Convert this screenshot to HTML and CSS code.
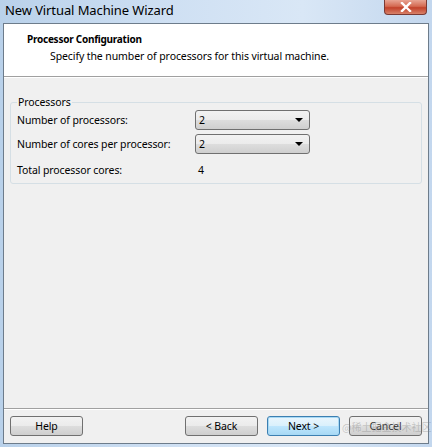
FILE: index.html
```html
<!DOCTYPE html>
<html>
<head>
<meta charset="utf-8">
<link rel="stylesheet" href="styles.css">
</head>
<body>
<div class="window">
  <div class="titlebar">
    <span class="title">New Virtual Machine Wizard</span>
    <div class="close">
      <svg width="14" height="10" viewBox="0 0 14 10"><path d="M3 1 L11 9 M11 1 L3 9" stroke="#fff" stroke-width="2.4" stroke-linecap="square"/></svg>
    </div>
  </div>
  <div class="client">
    <div class="header">
      <div class="h-title">Processor Configuration</div>
      <div class="h-sub">Specify the number of processors for this virtual machine.</div>
    </div>
    <div class="body">
      <fieldset class="group">
        <legend>Processors</legend>
        <div class="row">
          <span class="label">Number of processors:</span>
          <div class="combo"><span>2</span><span class="arrow"></span></div>
        </div>
        <div class="row">
          <span class="label">Number of cores per processor:</span>
          <div class="combo"><span>2</span><span class="arrow"></span></div>
        </div>
        <div class="row">
          <span class="label">Total processor cores:</span>
          <span class="value">4</span>
        </div>
      </fieldset>
    </div>
    <div class="footer">
      <button class="btn">Help</button>
      <div class="spacer"></div>
      <button class="btn">&lt; Back</button>
      <button class="btn default">Next &gt;</button>
      <div class="cancel-wrap">
        <button class="btn cancel">Cancel</button>
        <span class="wm">@稀土掘金技术社区</span>
      </div>
    </div>
  </div>
</div>
</body>
</html>
```
FILE: styles.css
```css
html, body {
  margin: 0;
  padding: 0;
}
body {
  width: 432px;
  height: 447px;
  overflow: hidden;
  font-family: "Noto Sans", "Liberation Sans", sans-serif;
  font-size: 10.5px;
  letter-spacing: -0.1px;
  color: #000;
}
.window {
  width: 432px;
  height: 447px;
  box-sizing: border-box;
  background: linear-gradient(90deg, #b9d1ea 0%, #cfe0f3 40%, #d9e7f6 70%, #c3d7ee 100%);
  display: flex;
  flex-direction: column;
  padding: 0 3px 3px 3px;
}
.titlebar {
  height: 23px;
  display: flex;
  align-items: flex-start;
  flex: none;
}
.title {
  font-size: 13px;
  line-height: 20px;
  padding-left: 2px;
  color: #000;
  letter-spacing: -0.1px;
}
.close {
  margin-left: auto;
  margin-right: 2px;
  width: 43px;
  height: 15px;
  box-sizing: border-box;
  border: 1px solid #7a3a34;
  border-top: none;
  border-radius: 0 0 4px 4px;
  background: linear-gradient(180deg, #e8a493 0%, #d46a52 45%, #c2412a 55%, #d8826a 100%);
  display: flex;
  align-items: center;
  justify-content: center;
}
.client {
  flex: 1;
  border: 1px solid #6d7c8b;
  background: #f0f0f0;
  display: flex;
  flex-direction: column;
  min-height: 0;
}
.header {
  background: #fff;
  height: 53px;
  box-sizing: border-box;
  border-bottom: 1px solid #a0a0a0;
  box-shadow: 0 1px 0 #fff;
  padding: 7px 0 0 23px;
  flex: none;
}
.h-title {
  font-weight: bold;
  font-size: 10px;
  letter-spacing: -0.25px;
  line-height: 16px;
}
.h-sub {
  padding-left: 23px;
  line-height: 16px;
  margin-top: 1px;
}
.body {
  flex: 1;
  padding: 18px 6px 0 6px;
}
.group {
  margin: 0;
  border: 1px solid #d5dfe5;
  border-radius: 3px;
  padding: 0 6px 6px 6px;
  height: 89px;
  box-sizing: border-box;
}
.group legend {
  padding: 0 1px;
  margin-left: 0;
  line-height: 14px;
}
.row {
  display: flex;
  align-items: center;
  height: 26px;
}
.row:first-of-type {
  height: 22px;
}
.label {
  width: 178px;
  flex: none;
}
.combo {
  width: 115px;
  height: 20px;
  box-sizing: border-box;
  border: 1px solid #707070;
  border-radius: 3px;
  background: linear-gradient(180deg, #f2f2f2 0%, #ebebeb 50%, #dddddd 51%, #cfcfcf 100%);
  display: flex;
  align-items: center;
  padding: 0 6px 0 3px;
}
.combo span:first-child {
  flex: 1;
}
.arrow {
  width: 0;
  height: 0;
  border-left: 4px solid transparent;
  border-right: 4px solid transparent;
  border-top: 4px solid #000;
}
.value {
  padding-left: 3px;
}
.footer {
  flex: none;
  height: 34px;
  border-top: 1px solid #a0a0a0;
  box-shadow: inset 0 1px 0 #fff;
  display: flex;
  align-items: center;
  padding: 0 6px 0 6px;
  gap: 9px;
}
.spacer {
  flex: 1;
}
.btn {
  font-family: inherit;
  font-size: 10.5px;
  letter-spacing: -0.1px;
  width: 73px;
  height: 20px;
  box-sizing: border-box;
  border: 1px solid #707070;
  border-radius: 3px;
  background: linear-gradient(180deg, #f2f2f2 0%, #ebebeb 50%, #dddddd 51%, #cfcfcf 100%);
  padding: 0;
  color: #000;
}
.btn.default {
  border-color: #3c7fb1;
  background: linear-gradient(180deg, #eaf6fd 0%, #d9f0fc 50%, #bee6fd 51%, #a7d9f5 100%);
  box-shadow: inset 0 0 0 1px #a7d9f5;
}
.cancel-wrap {
  position: relative;
  display: flex;
}
.btn.cancel {
  color: #333;
}
.wm {
  position: absolute;
  left: -7px;
  top: 3px;
  white-space: nowrap;
  font-family: "Noto Sans CJK SC", sans-serif;
  font-size: 10px;
  letter-spacing: 0;
  color: rgba(130,130,130,0.4);
  pointer-events: none;
}
```
